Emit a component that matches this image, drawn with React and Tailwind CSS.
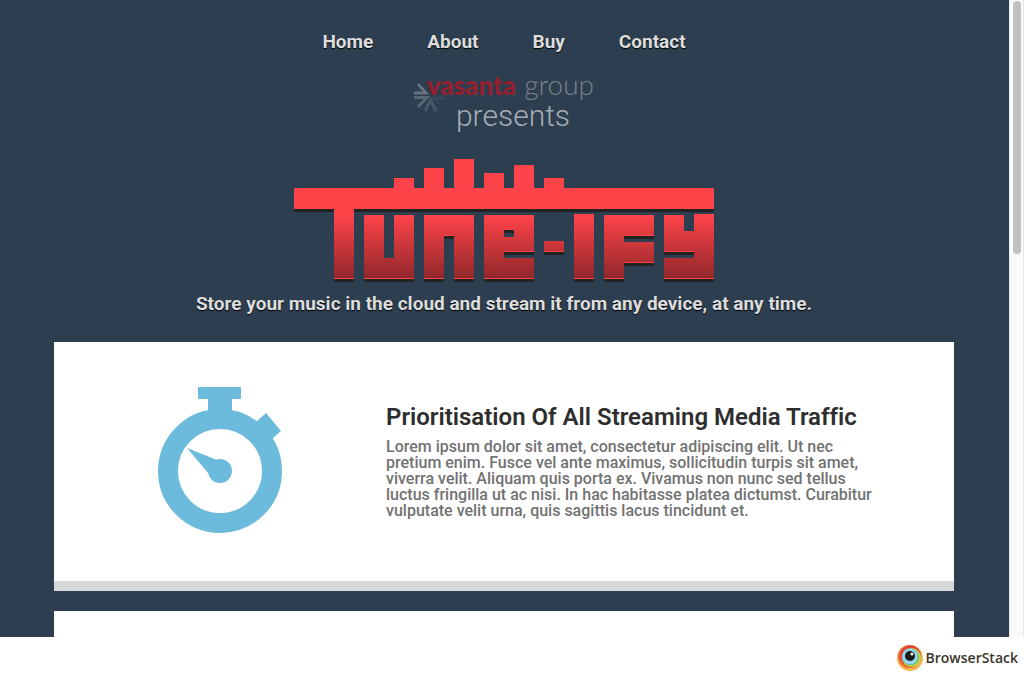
const NAV = ['Home', 'About', 'Buy', 'Contact'];

// [x, y, width, height]
const BODY = [
  [40, 49, 20, 71],
  [70, 56, 20, 64], [90, 99, 10, 21], [100, 56, 20, 64],
  [130, 56, 20, 64], [150, 56, 10, 21], [160, 56, 20, 64],
  [190, 56, 20, 64], [210, 56, 10, 15], [210, 78, 10, 15], [220, 56, 20, 37], [210, 99, 30, 21],
  [250, 82, 20, 11],
  [280, 55, 20, 65],
  [310, 56, 20, 64], [330, 56, 30, 21], [330, 83, 30, 21],
  [370, 56, 20, 37], [390, 72, 10, 21], [400, 55, 20, 65], [370, 99, 30, 21],
];
// [x, y of the lower edge, width]
const EDGES = [
  [40, 119, 20], [70, 119, 50], [130, 119, 20], [160, 119, 20], [150, 76, 10],
  [190, 119, 50], [210, 70, 10], [210, 92, 30], [250, 92, 20], [280, 119, 20],
  [310, 119, 20], [330, 76, 30], [330, 103, 30], [370, 119, 50], [370, 92, 30],
];
const BARS = [[100, 19], [130, 9], [160, 0], [190, 14], [220, 6], [250, 19]];

function TuneifyLogo() {
  return (
    <svg width="420" height="123" viewBox="0 0 420 123" shapeRendering="crispEdges" role="img" aria-label="Tune-ify">
      <defs>
        <linearGradient id="fade" gradientUnits="userSpaceOnUse" x1="0" y1="56" x2="0" y2="120">
          <stop offset="0" stopColor="#ff4449" />
          <stop offset="1" stopColor="#8f272a" />
        </linearGradient>
      </defs>
      {BARS.map(([x, y]) => <rect key={x} x={x} y={y} width="20" height={30 - y} fill="#ff4449" />)}
      <rect y="29" width="420" height="21" fill="#ff4449" />
      <rect y="50" width="420" height="3" fill="#222222" />
      {BODY.map(([x, y, w, h]) => <rect key={`${x}-${y}`} x={x} y={y} width={w} height={h} fill="url(#fade)" />)}
      {EDGES.map(([x, y, w]) => (
        <g key={`${x}-${y}`}>
          <rect x={x} y={y} width={w} height="1" fill="#ff4449" />
          <rect x={x} y={y + 1} width={w} height="3" fill="#222222" />
        </g>
      ))}
    </svg>
  );
}

function VasantaMark() {
  return (
    <svg className="absolute top-2 left-0" width="32" height="32" viewBox="0 0 32 32" fill="none" strokeWidth="3" aria-hidden="true">
      <path d="M4 4L12 13H0" stroke="#667280" />
      <path d="M0 17.500H13L4 27" stroke="#566474" />
      <path d="M11 31L16.500 20L22 31" stroke="#48586a" />
      <path d="M30 18.500H19L25 23" stroke="#35475a" />
    </svg>
  );
}

function Stopwatch() {
  return (
    <svg width="124" height="146" viewBox="0 0 124 146" fill="#6cbbdc" aria-hidden="true">
      <path d="M40 0h43v12h-9v16H50V12H40z" />
      <path d="M98 35l10-9 15 18-9 8z" />
      <circle cx="62" cy="84" r="52" fill="none" stroke="#6cbbdc" strokeWidth="20" />
      <circle cx="62" cy="84" r="12" />
      <path d="M29 61l30 12-9 13z" />
    </svg>
  );
}

function BrowserStackMark() {
  return (
    <svg width="26" height="26" viewBox="0 0 26 26" aria-hidden="true">
      <circle cx="13" cy="13" r="13" fill="#f7b552" />
      <circle cx="12.500" cy="11.500" r="11.500" fill="#ea6a35" />
      <circle cx="13.500" cy="11" r="10.500" fill="#e54139" />
      <circle cx="14.500" cy="12.500" r="9.500" fill="#bfd64c" />
      <circle cx="13.500" cy="12" r="8.500" fill="#6bb85a" />
      <circle cx="13" cy="11.500" r="8" fill="#8fd5ee" />
      <circle cx="13" cy="11" r="5" fill="#1b1918" />
      <circle cx="15" cy="9" r="1.500" fill="#ffffff" />
    </svg>
  );
}

export default function App() {
  return (
    <div className="flex h-screen flex-col overflow-hidden bg-white font-['Roboto',sans-serif]">
      <div className="flex min-h-0 flex-1">
        <main className="flex min-w-0 flex-1 flex-col items-center overflow-hidden bg-[#2d3e50] pr-px">
          <nav className="flex shrink-0 gap-[54px] pt-7 text-[19px] leading-7 font-bold text-[#dddddd] [text-shadow:0_1px_1px_#000]">
            {NAV.map((n) => <a key={n} href={`#${n.toLowerCase()}`}>{n}</a>)}
          </nav>
          <div className="relative mt-4 h-[62px] w-[180px] shrink-0">
            <VasantaMark />
            <div className="relative flex items-baseline justify-end gap-2 font-['Lato',sans-serif] leading-6 whitespace-nowrap">
              <span className="text-[26px] font-black text-[#95202f]">vasanta</span>
              <span className="text-[28px] font-light text-[#7b8088]">group</span>
            </div>
            <p className="mt-[3px] pl-[18px] text-center text-[30px] leading-8 font-light text-[#a5adb6]">presents</p>
          </div>
          <h1 className="mt-[25px] shrink-0"><TuneifyLogo /></h1>
          <p className="mt-2 shrink-0 text-[19px] leading-7 font-bold text-[#dddddd] [text-shadow:0_1px_1px_#000]">
            Store your music in the cloud and stream it from any device, at any time.
          </p>
          <section className="mt-6 flex min-h-[249px] w-full max-w-[900px] shrink-0 border-b-10 border-[#d5d9d9] bg-white">
            <div className="flex w-[332px] shrink-0 justify-center pt-[45px]"><Stopwatch /></div>
            <div className="flex-1 pt-[58px] pr-[75px] [font-variant-ligatures:none]">
              <h2 className="text-[24px] leading-[34px] font-semibold text-[#2e2e2e]">Prioritisation Of All Streaming Media Traffic</h2>
              <p className="mt-[5px] text-[16px] leading-4 font-medium text-[#727272]">
                Lorem ipsum dolor sit amet, consectetur adipiscing elit. Ut nec pretium enim. Fusce vel ante maximus, sollicitudin turpis sit amet, viverra velit. Aliquam quis porta ex. Vivamus non nunc sed tellus luctus fringilla ut ac nisi. In hac habitasse platea dictumst. Curabitur vulputate velit urna, quis sagittis lacus tincidunt et.
              </p>
            </div>
          </section>
          <section className="mt-5 min-h-[249px] w-full max-w-[900px] shrink-0 border-b-10 border-[#d5d9d9] bg-white" />
        </main>
        <div className="flex w-[15px] shrink-0 justify-center border-x border-[#e8e8e8] bg-[#fafafa] pt-px">
          <div className="h-[253px] w-2 rounded-full bg-[#c1c1c1]" />
        </div>
      </div>
      <footer className="flex h-10 shrink-0 items-center justify-end gap-[3px] pt-0.5 pr-1.5">
        <BrowserStackMark />
        <span className="font-['Open_Sans',sans-serif] text-[14px] leading-5 font-semibold text-[#3c352c]">BrowserStack</span>
      </footer>
    </div>
  );
}
